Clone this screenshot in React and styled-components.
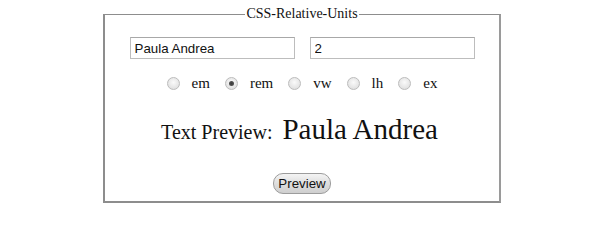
import { useState } from "react";
import styled, { createGlobalStyle } from "styled-components";

const GlobalStyle = createGlobalStyle`
  html, body {
    margin: 0;
    padding: 0;
    background: #fff;
    font-family: "Liberation Serif", "Times New Roman", serif;
    color: #111;
  }
`;

const Page = styled.div`
  width: 600px;
  height: 214px;
  padding-top: 6px;
  box-sizing: border-box;
  overflow: hidden;
`;

const Fieldset = styled.fieldset`
  box-sizing: border-box;
  width: 398px;
  margin: 0 0 0 103px;
  padding: 0 0 7px;
  border-style: solid;
  border-color: #8d8d8d #9a9a9a #8d8d8d #8d8d8d;
  border-width: 1px 2px 2px 2px;
  min-width: 0;
`;

const Legend = styled.legend`
  margin: 0 auto;
  padding: 0 1px;
  font-size: 14px;
  line-height: 16px;
`;

const Body = styled.div`
  display: flex;
  flex-direction: column;
  align-items: center;
`;

const InputRow = styled.div`
  display: flex;
  gap: 15px;
  margin-top: 15px;
`;

const TextInput = styled.input`
  box-sizing: border-box;
  width: 165px;
  height: 22px;
  padding: 0 4px;
  border: 1px solid #bdbdbd;
  border-top-color: #a8a8a8;
  font-family: "Liberation Sans", Arial, sans-serif;
  font-size: 13.33px;
  color: #111;
  outline: none;
`;

const RadioRow = styled.div`
  display: flex;
  align-items: center;
  height: 18px;
  margin-top: 15px;
  gap: 15px;
`;

const RadioItem = styled.label`
  display: flex;
  align-items: center;
  gap: 12px;
  font-size: 15px;
  line-height: 18px;
`;

const Radio = styled.input`
  appearance: none;
  margin: 0;
  width: 13px;
  height: 13px;
  border-radius: 50%;
  border: 1px solid #bcbcbc;
  box-sizing: border-box;
  background: radial-gradient(circle at 50% 40%, #fafafa 0%, #e6e6e6 60%, #d8d8d8 100%);
  position: relative;

  &:checked::after {
    content: "";
    position: absolute;
    left: 3px;
    top: 3px;
    width: 5px;
    height: 5px;
    border-radius: 50%;
    background: radial-gradient(circle, #3a3a3a 0%, #5c5c5c 100%);
  }
`;

const PreviewLine = styled.div`
  display: flex;
  align-items: baseline;
  gap: 10px;
  margin-top: 21px;
  padding-right: 5px;
  line-height: 32px;
`;

const PreviewLabel = styled.span`
  font-size: 20px;
`;

const PreviewText = styled.span`
  font-size: ${(p) => p.$size}px;
`;

const Button = styled.button`
  box-sizing: border-box;
  height: 21px;
  margin-top: 25px;
  padding: 0 4px;
  border: 1px solid #9c9c9c;
  border-radius: 10px;
  background: linear-gradient(#f4f4f4, #dedede 50%, #cfcfcf);
  font-family: "Liberation Sans", Arial, sans-serif;
  font-size: 13.33px;
  color: #111;
`;

const units = ["em", "rem", "vw", "lh", "ex"];

export default function App() {
  const [name, setName] = useState("Paula Andrea");
  const [size, setSize] = useState("2");
  const [unit, setUnit] = useState("rem");

  return (
    <Page>
      <GlobalStyle />
      <Fieldset>
        <Legend>CSS-Relative-Units</Legend>
        <Body>
          <InputRow>
            <TextInput value={name} onChange={(e) => setName(e.target.value)} />
            <TextInput value={size} onChange={(e) => setSize(e.target.value)} />
          </InputRow>
          <RadioRow>
            {units.map((u) => (
              <RadioItem key={u}>
                <Radio
                  type="radio"
                  name="unit"
                  checked={unit === u}
                  onChange={() => setUnit(u)}
                />
                {u}
              </RadioItem>
            ))}
          </RadioRow>
          <PreviewLine>
            <PreviewLabel>Text Preview:</PreviewLabel>
            <PreviewText $size={29}>{name}</PreviewText>
          </PreviewLine>
          <Button>Preview</Button>
        </Body>
      </Fieldset>
    </Page>
  );
}
